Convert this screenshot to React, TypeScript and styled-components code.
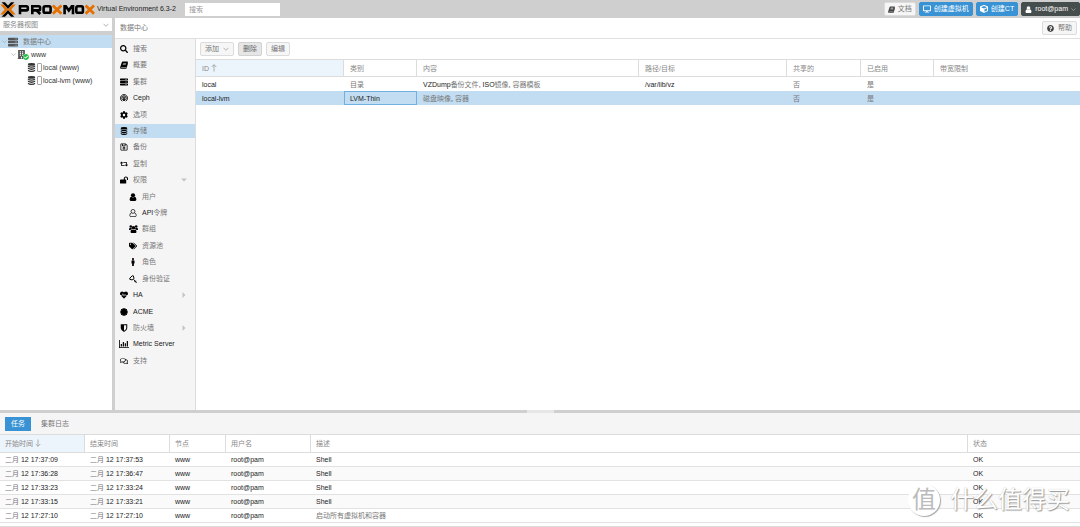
import React from "react";
import styled, { createGlobalStyle, css } from "styled-components";
import {
  FaSearch, FaServer, FaCog, FaRegSave, FaRetweet, FaLockOpen,
  FaTags, FaMale, FaHeartbeat, FaCertificate, FaRegComments,
  FaDesktop, FaCube, FaQuestionCircle, FaCheckCircle, FaBuilding,
} from "react-icons/fa";

const GlobalStyle = createGlobalStyle`
  *, *::before, *::after { box-sizing: border-box; }
  body { margin: 0; }
  body, button, input, select {
    font: 7px/12px "Liberation Sans", "Noto Sans CJK SC", sans-serif;
    color: #222;
  }
`;

const Han = styled.span`color: #777;`;

/* Chinese runs are set in a lighter grey than Latin ones */
function Text({ children }: { children: string }) {
  const parts = children.split(/([\u4e00-\u9fff]+)/);
  return <>{parts.map((p, i) => (i % 2 ? <Han key={i}>{p}</Han> : p))}</>;
}

const Page = styled.div`
  display: flex;
  flex-direction: column;
  min-height: 100vh;
  background: #fff;
`;

const TopBar = styled.header`
  display: flex;
  align-items: center;
  height: 18px;
  background: #cfcfcf;
  white-space: nowrap;
`;
const Logo = styled.svg`
  width: 95px;
  height: 17px;
  margin-right: 2px;
  flex: none;
`;
const Version = styled.span`
  width: 83px;
  margin-right: 5px;
`;
const SearchBox = styled.input`
  width: 95px;
  height: 13px;
  padding: 0 4px;
  border: 0;
  background: #fff;
  &::placeholder { color: #999; }
`;
const TopActions = styled.div`
  display: flex;
  gap: 3px;
  margin-left: auto;
`;

type Tone = "plain" | "pressed" | "blue" | "dark";
const tones = {
  plain: css`background: #f6f6f6; border-color: #dcdcdc; color: #777;`,
  pressed: css`background: #e6e6e6; border-color: #d2d2d2; color: #666;`,
  blue: css`background: #3892d4; border-color: #3892d4; color: #fff;`,
  dark: css`background: #464d4d; border-color: #464d4d; color: #fff;`,
};
const Button = styled.button<{ $tone?: Tone }>`
  display: inline-flex;
  align-items: center;
  gap: 4px;
  height: 14px;
  padding: 0 4px;
  border: 1px solid;
  border-radius: 2px;
  white-space: nowrap;
  ${({ $tone = "plain" }) => tones[$tone]}
  svg { flex: none; }
`;
const TopButton = styled(Button)`
  gap: 3px;
  padding: 0 3px;
`;
const DarkIcon = styled.span`
  display: flex;
  color: #444;
`;

const Middle = styled.div`
  display: flex;
  flex: 1;
`;
const Left = styled.aside`
  display: flex;
  flex-direction: column;
  width: 112px;
  flex: none;
`;
const ViewPicker = styled.label`
  display: flex;
  align-items: center;
  height: 17px;
  padding-right: 3px;
  border-bottom: 4px solid #cfcfcf;
`;
const ViewSelect = styled.select`
  flex: 1;
  padding: 0 3px;
  border: 0;
  background: #fff;
  color: #888;
  appearance: none;
`;
const Tree = styled.ul`
  margin: 0;
  padding: 0;
  list-style: none;
`;
const TreeRow = styled.li<{ $indent: number; $selected?: boolean }>`
  display: flex;
  align-items: center;
  gap: 1px;
  height: 13px;
  padding-left: ${({ $indent }) => $indent}px;
  background: ${({ $selected }) => ($selected ? "#c2ddf2" : "#fff")};
  color: #333;
`;
const TreeIcon = styled.span`
  display: flex;
  position: relative;
  margin-right: 4px;
  color: #555;
`;
const Badge = styled.span`
  position: absolute;
  right: -3px;
  bottom: -1px;
  display: flex;
  border-radius: 50%;
  background: #fff;
  color: #21bf4b;
`;
const VSplit = styled.div`
  width: 3px;
  background: #cfcfcf;
`;

const Main = styled.main`
  display: flex;
  flex-direction: column;
  flex: 1;
  min-width: 0;
`;
const MainHead = styled.div`
  display: flex;
  align-items: center;
  justify-content: space-between;
  height: 21px;
  padding: 0 3px 0 5px;
  border-bottom: 1px solid #e0e0e0;
`;
const Body = styled.div`
  display: flex;
  flex: 1;
`;
const Nav = styled.nav`
  width: 81px;
  flex: none;
  padding-top: 3px;
  background: #f5f5f5;
  border-right: 1px solid #dcdcdc;
`;
const NavList = styled.ul`
  display: flex;
  flex-direction: column;
  justify-content: space-between;
  height: 326px;
  margin: 0;
  padding: 0;
  list-style: none;
`;
const NavItem = styled.li<{ $sub?: boolean; $selected?: boolean }>`
  display: flex;
  align-items: center;
  height: 14px;
  padding: 0 8px 0 ${({ $sub }) => ($sub ? 13 : 4)}px;
  background: ${({ $selected }) => ($selected ? "#c2ddf2" : "transparent")};
`;
const NavIcon = styled.span`
  display: flex;
  justify-content: center;
  width: 10px;
  margin-right: 4px;
  color: #000;
  svg { flex: none; }
`;
const NavLink = styled.a`
  flex: 1;
  color: #222;
  text-decoration: none;
  white-space: nowrap;
`;
const Content = styled.section`
  flex: 1;
  min-width: 0;
`;
const Toolbar = styled.div`
  display: flex;
  align-items: center;
  gap: 4px;
  height: 20px;
  padding-left: 4px;
`;

const Grid = styled.table`
  width: 100%;
  table-layout: fixed;
  border-collapse: separate;
  border-spacing: 0;
  border-top: 1px solid #dcdcdc;
`;
const Th = styled.th<{ $sorted?: boolean }>`
  height: 17px;
  padding: 1px 6px 0;
  border-right: 1px solid #dcdcdc;
  border-bottom: 1px solid #dcdcdc;
  background: ${({ $sorted }) => ($sorted ? "#edf5fc" : "#fff")};
  color: #888;
  font-weight: 400;
  text-align: left;
  white-space: nowrap;
  &:last-child { border-right: 0; }
  svg { margin-left: 2px; vertical-align: -1px; }
`;
const Td = styled.td<{ $focus?: boolean }>`
  height: 14px;
  padding: 1px 6px 0;
  overflow: hidden;
  white-space: nowrap;
  box-shadow: ${({ $focus }) => ($focus ? "inset 0 0 0 1px #6fb0e0" : "none")};
`;
const Tr = styled.tr<{ $selected?: boolean }>`
  background: ${({ $selected }) => ($selected ? "#c2ddf2" : "#fff")};
`;

const Handle = styled.div`
  display: flex;
  justify-content: center;
  height: 3px;
  background: #cfcfcf;
  &::after { content: ""; width: 27px; background: #e6e6e6; }
`;
const Log = styled.section`
  position: relative;
  height: 114px;
  border-bottom: 1px solid #dcdcdc;
`;
const Tabs = styled.div`
  display: flex;
  align-items: center;
  gap: 4px;
  height: 21px;
  padding-left: 5px;
  background: #f5f5f5;
`;
const Tab = styled.button<{ $active?: boolean }>`
  height: 14px;
  padding: 0 6px;
  border: 0;
  background: ${({ $active }) => ($active ? "#3892d4" : "transparent")};
  color: ${({ $active }) => ($active ? "#fff" : "#777")};
`;
const LogGrid = styled(Grid)`
  th { height: 18px; padding-left: 5px; }
  td { padding-left: 5px; border-bottom: 1px solid #e2e2e2; }
  tbody tr:nth-child(even) { background: #fafafa; }
`;
const Watermark = styled.div`
  position: absolute;
  right: 10px;
  bottom: 10px;
  display: flex;
  align-items: center;
  gap: 10px;
  color: #fff;
  font-size: 24px;
  line-height: 32px;
  text-shadow: 1px 1px 1px #999, 0 0 1px #bbb;
  pointer-events: none;
`;
const WatermarkDisc = styled.span`
  width: 32px;
  height: 32px;
  border-radius: 50%;
  background: #fff;
  box-shadow: 1px 1px 1px #aaa;
  color: #bbb;
  text-align: center;
  text-shadow: none;
`;

const Chevron = ({ size = 6 }: { size?: number }) => (
  <svg width={size} height={size} viewBox="0 0 6 6" fill="none" stroke="#aaa" strokeWidth="0.9">
    <path d="M.5 1.8 3 4.3 5.5 1.8" />
  </svg>
);
const Arrow = ({ down }: { down?: boolean }) => (
  <svg width="6" height="8" viewBox="0 0 6 8" fill="none" stroke="#999" strokeWidth="0.8">
    <path d={down ? "M3 .5V7.3M.7 5 3 7.3 5.3 5" : "M3 7.5V.7M.7 3 3 .7 5.3 3"} />
  </svg>
);
const Caret = ({ open }: { open?: boolean }) => (
  <svg width="6" height="6" viewBox="0 0 6 6" fill="#c4c4c4">
    <path d={open ? "M0 1.5h6L3 4.5z" : "M1.5 0v6L4.5 3z"} />
  </svg>
);

type IconProps = { size?: number };
const BarChart = () => (
  <svg width="10" height="8" viewBox="0 0 20 16" fill="currentColor">
    <path d="M0 0h1.6v14.4H20V16H0zM3.5 8h2.4v5H3.5zM7.5 4h2.4v9H7.5zM11.5 6.5h2.4V13h-2.4zM15.5 2h2.4v11h-2.4z" />
  </svg>
);
const Book = ({ size = 8 }: IconProps) => (
  <svg width={size} height={size} viewBox="0 0 16 16" fill="currentColor">
    <path fillRule="evenodd" d="M5.5 1h9.3q1.4.2 1 1.700l-2.900 9.300q-.4 1.200-1.700 1.200H2.600q-.9 0-.6.7.3.5 1 .5h9.200l3.300-10.200q.7.5.4 1.400l-2.800 9q-.4 1.400-1.800 1.400H2.700Q.2 15.500.2 12.900L3.600 2.500Q4 1 5.500 1zM6.600 4l-.4 1.200h6L12.600 4zM5.800 6.500l-.4 1.200h6l.4-1.200z" />
  </svg>
);
const Database = ({ size = 8 }: IconProps) => (
  <svg width={size} height={size} viewBox="0 0 14 16" fill="currentColor">
    <ellipse cx="7" cy="2.5" rx="6.5" ry="2.5" />
    <path d="M.5 4.300q6.500 3.400 13 0v2.200q-6.500 4-13 0zM.5 8.100q6.500 3.400 13 0v2.200q-6.500 4-13 0zM.5 11.900q6.500 3.400 13 0v1.700q-1 2.400-6.500 2.400T.5 13.600z" />
  </svg>
);
const Person = ({ size = 8 }: IconProps) => (
  <svg width={size} height={size} viewBox="0 0 16 16" fill="currentColor">
    <circle cx="8" cy="4.5" r="4.2" />
    <path d="M4.800 7.500Q8 10.500 11.200 7.500 14.800 8 14.800 13q0 2.800-2.600 2.800H3.800Q1.200 15.800 1.200 13q0-5 3.600-5.500z" />
  </svg>
);
const PersonOutline = ({ size = 8 }: IconProps) => (
  <svg width={size} height={size} viewBox="0 0 16 16" fill="none" stroke="currentColor" strokeWidth="1.4">
    <circle cx="8" cy="4.8" r="3.9" />
    <path d="M5 7.800Q1.500 8.500 1.500 13q0 2.200 2.200 2.200h8.600q2.200 0 2.200-2.200 0-4.500-3.500-5.200" />
  </svg>
);
const People = () => (
  <svg width="9" height="8" viewBox="0 0 18 16" fill="currentColor">
    <circle cx="3.6" cy="3" r="2.6" />
    <circle cx="14.4" cy="3" r="2.6" />
    <circle cx="9" cy="5.6" r="3.5" />
    <path d="M0 9.800q0-4 2-4.200 2 1 3.200.2.1 1.600 1.200 2.700H4.500Q3 9.800 3 9.800zM18 9.800q0-4-2-4.200-2 1-3.200.2-.1 1.600-1.200 2.700h1.900Q15 9.800 15 9.800zM6 9q3 2 6 0 3 .4 3 4.600 0 2.400-2.200 2.400H5.200Q3 16 3 13.600 3 9.400 6 9z" />
  </svg>
);
const Ceph = ({ size = 8 }: IconProps) => (
  <svg width={size} height={size} viewBox="0 0 16 16" fill="none" stroke="currentColor" strokeWidth="1.9">
    <path d="M4.500 14.300A7 7 0 1 1 11.500 14.300M5.600 11.500A4.200 4.200 0 1 1 10.400 11.500" />
    <circle cx="8" cy="8" r="1.2" fill="currentColor" />
    <path d="M6.800 10v4M9.200 10v4" />
  </svg>
);
const Key = ({ size = 8 }: IconProps) => (
  <svg width={size} height={size} viewBox="0 0 16 16" fill="none" stroke="currentColor" strokeWidth="2">
    <path d="M8.500 1.500 10 6.500 6.500 10 1.500 8.500 1.500 6.500 6.500 1.500zM8.800 8.800 15 14.500M11 13.500 13 11.500M13.500 15.500 15.500 13.500" />
  </svg>
);
const Shield = ({ size = 8 }: IconProps) => (
  <svg width={size} height={size} viewBox="0 0 14 16" fill="currentColor">
    <path fillRule="evenodd" d="M.5.5h13v8q0 4.500-6.500 7.300Q.5 13 .5 8.500zM7 2.500v11q4.500-2.200 4.500-5v-6z" />
  </svg>
);
const StorageSheet = () => (
  <svg width="5" height="9" viewBox="0 0 5 9" fill="#fff" stroke="#888" strokeWidth="0.8">
    <rect x=".5" y=".5" width="4" height="8" rx=".6" />
  </svg>
);

const ProxmoxLogo = () => (
  <Logo viewBox="0 0 95 17" role="img" aria-label="Proxmox">
    <path fill="#000" d="M1.600 1.200H5L8 4.600l3-3.400h3.400L8 8zM1.600 15.800H5l3-3.400 3 3.400h3.400L8 9z" />
    <path fill="#e57000" d="M.3 3.600h3.300L8 8.500l-4.400 4.900H.3L4.700 8.500zM15.700 3.600h-3.300L8 8.500l4.400 4.900h3.300L11.300 8.500z" />
    <g fill="none" stroke="#000" strokeWidth="2.6">
      <path d="M20 13.200V5.300h6.400q1.400 0 1.400 1.400v1.300q0 1.400-1.400 1.400H20" />
      <path d="M32.300 13.200V5.300h6.400q1.400 0 1.400 1.400v1.300q0 1.400-1.400 1.400h-6.400M36.600 9.600 40.300 13" />
      <rect x="43.600" y="5.300" width="7" height="6.500" rx="1.600" />
      <path d="M64.600 13.200V5.300h1.200l3 4.300 3-4.300H73v7.900" />
      <rect x="76.300" y="5.300" width="6.600" height="6.500" rx="1.600" />
    </g>
    <path fill="none" stroke="#e57000" strokeWidth="2.8" d="M52.800 4.400 61.400 12.800M61.400 4.400 52.800 12.800M85.600 4.400 94 12.800M94 4.400 85.600 12.800" />
  </Logo>
);

type NavEntry = { label: string; icon: React.ComponentType<IconProps>; sub?: boolean; caret?: "open" | "closed" };
const nav: NavEntry[] = [
  { label: "搜索", icon: FaSearch },
  { label: "概要", icon: Book },
  { label: "集群", icon: FaServer },
  { label: "Ceph", icon: Ceph },
  { label: "选项", icon: FaCog },
  { label: "存储", icon: Database },
  { label: "备份", icon: FaRegSave },
  { label: "复制", icon: FaRetweet },
  { label: "权限", icon: FaLockOpen, caret: "open" },
  { label: "用户", icon: Person, sub: true },
  { label: "API令牌", icon: PersonOutline, sub: true },
  { label: "群组", icon: People, sub: true },
  { label: "资源池", icon: FaTags, sub: true },
  { label: "角色", icon: FaMale, sub: true },
  { label: "身份验证", icon: Key, sub: true },
  { label: "HA", icon: FaHeartbeat, caret: "closed" },
  { label: "ACME", icon: FaCertificate },
  { label: "防火墙", icon: Shield, caret: "closed" },
  { label: "Metric Server", icon: BarChart },
  { label: "支持", icon: FaRegComments },
];

const storageCols = ["ID", "类别", "内容", "路径/目标", "共享的", "已启用", "带宽限制"];
const storage = [
  ["local", "目录", "VZDump备份文件, ISO镜像, 容器模板", "/var/lib/vz", "否", "是", ""],
  ["local-lvm", "LVM-Thin", "磁盘映像, 容器", "", "否", "是", ""],
];
const logCols = ["开始时间", "结束时间", "节点", "用户名", "描述", "状态"];
const logs = [
  ["二月 12 17:37:09", "二月 12 17:37:53", "www", "root@pam", "Shell", "OK"],
  ["二月 12 17:36:28", "二月 12 17:36:47", "www", "root@pam", "Shell", "OK"],
  ["二月 12 17:33:23", "二月 12 17:33:24", "www", "root@pam", "Shell", "OK"],
  ["二月 12 17:33:15", "二月 12 17:33:21", "www", "root@pam", "Shell", "OK"],
  ["二月 12 17:27:10", "二月 12 17:27:10", "www", "root@pam", "启动所有虚拟机和容器", "OK"],
];

export default function App() {
  return (
    <Page>
      <GlobalStyle />
      <TopBar>
        <ProxmoxLogo />
        <Version>Virtual Environment 6.3-2</Version>
        <SearchBox aria-label="搜索" placeholder="搜索" />
        <TopActions>
          <TopButton><DarkIcon><Book size={7} /></DarkIcon>文档</TopButton>
          <TopButton $tone="blue"><FaDesktop size={8} />创建虚拟机</TopButton>
          <TopButton $tone="blue"><FaCube size={8} />创建CT</TopButton>
          <TopButton $tone="dark"><Person size={7} />root@pam<Chevron size={5} /></TopButton>
        </TopActions>
      </TopBar>
      <Middle>
        <Left>
          <ViewPicker>
            <ViewSelect aria-label="视图"><option>服务器视图</option></ViewSelect>
            <Chevron />
          </ViewPicker>
          <Tree>
            <TreeRow $indent={2} $selected>
              <Chevron size={5} />
              <TreeIcon><FaServer size={10} /></TreeIcon>
              <Text>数据中心</Text>
            </TreeRow>
            <TreeRow $indent={11}>
              <Chevron size={5} />
              <TreeIcon><FaBuilding size={9} /><Badge><FaCheckCircle size={6} /></Badge></TreeIcon>
              www
            </TreeRow>
            <TreeRow $indent={27}><Database size={9} /><StorageSheet />local (www)</TreeRow>
            <TreeRow $indent={27}><Database size={9} /><StorageSheet />local-lvm (www)</TreeRow>
          </Tree>
        </Left>
        <VSplit />
        <Main>
          <MainHead>
            <Text>数据中心</Text>
            <Button><DarkIcon><FaQuestionCircle size={7} /></DarkIcon>帮助</Button>
          </MainHead>
          <Body>
            <Nav>
              <NavList>
                {nav.map(({ label, icon: Icon, sub, caret }) => (
                  <NavItem key={label} $sub={sub} $selected={label === "存储"}>
                    <NavIcon><Icon size={8} /></NavIcon>
                    <NavLink href="#"><Text>{label}</Text></NavLink>
                    {caret && <Caret open={caret === "open"} />}
                  </NavItem>
                ))}
              </NavList>
            </Nav>
            <Content>
              <Toolbar>
                <Button>添加<Chevron /></Button>
                <Button $tone="pressed">删除</Button>
                <Button>编辑</Button>
              </Toolbar>
              <Grid>
                <colgroup>
                  {[148, 73, 222, 148, 74, 73].map((w, i) => <col key={i} width={w} />)}
                  <col />
                </colgroup>
                <thead>
                  <tr>{storageCols.map((c, i) => <Th key={c} $sorted={i === 0}>{c}{i === 0 && <Arrow />}</Th>)}</tr>
                </thead>
                <tbody>
                  {storage.map((row, r) => (
                    <Tr key={row[0]} $selected={r === 1}>
                      {row.map((cell, i) => <Td key={i} $focus={r === 1 && i === 1}><Text>{cell}</Text></Td>)}
                    </Tr>
                  ))}
                </tbody>
              </Grid>
            </Content>
          </Body>
        </Main>
      </Middle>
      <Handle />
      <Log>
        <Tabs>
          <Tab $active>任务</Tab>
          <Tab>集群日志</Tab>
        </Tabs>
        <LogGrid>
          <colgroup>
            {[85, 85, 56, 85].map((w, i) => <col key={i} width={w} />)}
            <col />
            <col width={112} />
          </colgroup>
          <thead>
            <tr>{logCols.map((c, i) => <Th key={c} $sorted={i === 0}>{c}{i === 0 && <Arrow down />}</Th>)}</tr>
          </thead>
          <tbody>
            {logs.map((row) => (
              <tr key={row[0]}>{row.map((cell, i) => <Td key={i}><Text>{cell}</Text></Td>)}</tr>
            ))}
          </tbody>
        </LogGrid>
        <Watermark><WatermarkDisc>值</WatermarkDisc>什么值得买</Watermark>
      </Log>
    </Page>
  );
}
